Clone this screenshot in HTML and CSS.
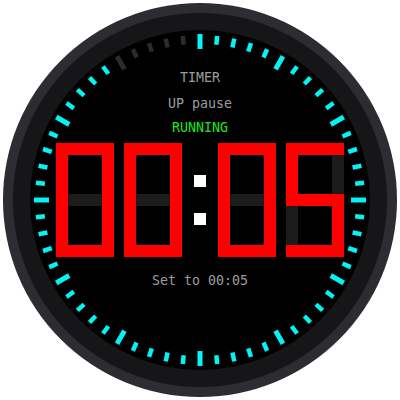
FILE: index.html
```html
<!DOCTYPE html>
<html>
<head>
<meta charset="utf-8">
<link rel="stylesheet" href="styles.css">
</head>
<body>
<div class="bezel">
  <div class="ring">
    <div class="face">
      <svg class="ticks" viewBox="0 0 340 340" aria-hidden="true">
        <defs>
          <rect id="mn" x="-2.25" y="-165" width="4.5" height="9"/>
          <rect id="mj" x="-2.5" y="-166" width="5" height="15"/>
        </defs>
        <g transform="translate(170 170)">
          <g class="on">
            <use href="#mj" transform="rotate(0)"/>
            <use href="#mn" transform="rotate(6)"/>
            <use href="#mn" transform="rotate(12)"/>
            <use href="#mn" transform="rotate(18)"/>
            <use href="#mn" transform="rotate(24)"/>
            <use href="#mj" transform="rotate(30)"/>
            <use href="#mn" transform="rotate(36)"/>
            <use href="#mn" transform="rotate(42)"/>
            <use href="#mn" transform="rotate(48)"/>
            <use href="#mn" transform="rotate(54)"/>
            <use href="#mj" transform="rotate(60)"/>
            <use href="#mn" transform="rotate(66)"/>
            <use href="#mn" transform="rotate(72)"/>
            <use href="#mn" transform="rotate(78)"/>
            <use href="#mn" transform="rotate(84)"/>
            <use href="#mj" transform="rotate(90)"/>
            <use href="#mn" transform="rotate(96)"/>
            <use href="#mn" transform="rotate(102)"/>
            <use href="#mn" transform="rotate(108)"/>
            <use href="#mn" transform="rotate(114)"/>
            <use href="#mj" transform="rotate(120)"/>
            <use href="#mn" transform="rotate(126)"/>
            <use href="#mn" transform="rotate(132)"/>
            <use href="#mn" transform="rotate(138)"/>
            <use href="#mn" transform="rotate(144)"/>
            <use href="#mj" transform="rotate(150)"/>
            <use href="#mn" transform="rotate(156)"/>
            <use href="#mn" transform="rotate(162)"/>
            <use href="#mn" transform="rotate(168)"/>
            <use href="#mn" transform="rotate(174)"/>
            <use href="#mj" transform="rotate(180)"/>
            <use href="#mn" transform="rotate(186)"/>
            <use href="#mn" transform="rotate(192)"/>
            <use href="#mn" transform="rotate(198)"/>
            <use href="#mn" transform="rotate(204)"/>
            <use href="#mj" transform="rotate(210)"/>
            <use href="#mn" transform="rotate(216)"/>
            <use href="#mn" transform="rotate(222)"/>
            <use href="#mn" transform="rotate(228)"/>
            <use href="#mn" transform="rotate(234)"/>
            <use href="#mj" transform="rotate(240)"/>
            <use href="#mn" transform="rotate(246)"/>
            <use href="#mn" transform="rotate(252)"/>
            <use href="#mn" transform="rotate(258)"/>
            <use href="#mn" transform="rotate(264)"/>
            <use href="#mj" transform="rotate(270)"/>
            <use href="#mn" transform="rotate(276)"/>
            <use href="#mn" transform="rotate(282)"/>
            <use href="#mn" transform="rotate(288)"/>
            <use href="#mn" transform="rotate(294)"/>
            <use href="#mj" transform="rotate(300)"/>
            <use href="#mn" transform="rotate(306)"/>
            <use href="#mn" transform="rotate(312)"/>
            <use href="#mn" transform="rotate(318)"/>
            <use href="#mn" transform="rotate(324)"/>
          </g>
          <g class="off">
            <use href="#mj" transform="rotate(330)"/>
            <use href="#mn" transform="rotate(336)"/>
            <use href="#mn" transform="rotate(342)"/>
            <use href="#mn" transform="rotate(348)"/>
            <use href="#mn" transform="rotate(354)"/>
          </g>
        </g>
      </svg>
      <div class="content">
        <div class="line title">TIMER</div>
        <div class="line mode">UP pause</div>
        <div class="line status">RUNNING</div>
        <div class="clock">
          <div class="digit">
            <i class="seg g"></i>
            <i class="seg a on"></i><i class="seg b on"></i><i class="seg c on"></i>
            <i class="seg d on"></i><i class="seg e on"></i><i class="seg f on"></i>
          </div>
          <div class="digit">
            <i class="seg g"></i>
            <i class="seg a on"></i><i class="seg b on"></i><i class="seg c on"></i>
            <i class="seg d on"></i><i class="seg e on"></i><i class="seg f on"></i>
          </div>
          <div class="colon"><i class="dot"></i><i class="dot"></i></div>
          <div class="digit">
            <i class="seg g"></i>
            <i class="seg a on"></i><i class="seg b on"></i><i class="seg c on"></i>
            <i class="seg d on"></i><i class="seg e on"></i><i class="seg f on"></i>
          </div>
          <div class="digit">
            <i class="seg b"></i><i class="seg e"></i>
            <i class="seg a on"></i><i class="seg f on"></i><i class="seg g on"></i>
            <i class="seg c on"></i><i class="seg d on"></i>
          </div>
        </div>
        <div class="line setto">Set to 00:05</div>
      </div>
    </div>
  </div>
</div>
</body>
</html>
```
FILE: styles.css
```css
html, body {
  margin: 0;
  padding: 0;
  background: #ffffff;
}
body {
  width: 400px;
  height: 400px;
  overflow: hidden;
}
.bezel {
  width: 394px;
  height: 394px;
  margin: 3px;
  box-sizing: border-box;
  padding: 10px;
  border-radius: 50%;
  background: #2d2c31;
}
.ring {
  width: 374px;
  height: 374px;
  box-sizing: border-box;
  padding: 17px;
  border-radius: 50%;
  background: #161618;
}
.face {
  position: relative;
  width: 340px;
  height: 340px;
  border-radius: 50%;
  background: #000000;
}
.ticks {
  position: absolute;
  left: 0;
  top: 0;
  width: 340px;
  height: 340px;
}
.ticks .on { fill: #00f4f8; }
.ticks .off { fill: #2c2c2c; }
.content {
  position: relative;
  display: flex;
  flex-direction: column;
  align-items: center;
  padding-top: 40px;
  font-family: "DejaVu Sans Mono", "Liberation Mono", monospace;
  font-size: 13.3px;
}
.line {
  height: 16px;
  line-height: 16px;
  white-space: pre;
  color: #9c9c9c;
}
.mode { margin-top: 10px; }
.status {
  margin-top: 8px;
  color: #1ee81e;
}
.clock {
  margin-top: 7px;
  display: flex;
  height: 114px;
}
.digit {
  display: grid;
  grid-template-columns: 12px 34px 12px;
  grid-template-rows: 12px 39px 12px 39px 12px;
  width: 58px;
  height: 114px;
}
.digit + .digit { margin-left: 10px; }
.seg { background: #1c1c1c; display: block; }
.seg.on { background: #ff0000; z-index: 1; }
.a { grid-column: 1 / 4; grid-row: 1 / 2; }
.b { grid-column: 3 / 4; grid-row: 1 / 4; }
.c { grid-column: 3 / 4; grid-row: 3 / 6; }
.d { grid-column: 1 / 4; grid-row: 5 / 6; }
.e { grid-column: 1 / 2; grid-row: 3 / 6; }
.f { grid-column: 1 / 2; grid-row: 1 / 4; }
.g { grid-column: 1 / 4; grid-row: 3 / 4; }
.colon {
  display: flex;
  flex-direction: column;
  justify-content: center;
  gap: 26px;
  margin: 0 12px;
}
.colon + .digit { margin-left: 0; }
.dot {
  display: block;
  width: 12px;
  height: 12px;
  background: #ffffff;
}
.setto { margin-top: 16px; }
```
